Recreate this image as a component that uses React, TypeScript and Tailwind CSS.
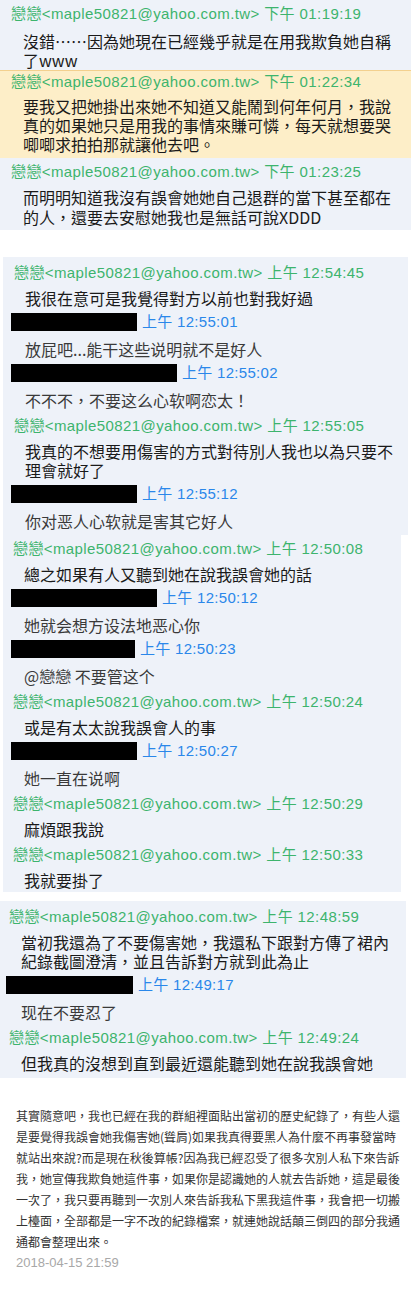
import React from "react";

type Row =
  | { k: "h"; t: string }
  | { k: "m"; lines: string[]; simp?: boolean }
  | { k: "b"; w: string; t: string };

const headCls =
  "flex items-center text-[15px] tracking-[0.4px] text-[#3db46d] whitespace-nowrap font-['Liberation_Sans','Noto_Sans_CJK_TC',sans-serif]";
const msgCls =
  "text-[16px] whitespace-nowrap font-['Noto_Sans_CJK_TC',sans-serif]";

function Header({ t, pl }: { t: string; pl: string }) {
  return (
    <div className={`pt-[2px] h-[26px] ${headCls} ${pl}`}>
      戀戀&lt;maple50821@yahoo.com.tw&gt; {t}
    </div>
  );
}

function Msg({ lines, pl, simp }: { lines: string[]; pl: string; simp?: boolean }) {
  return (
    <div
      className={`pt-[4px] pb-[2px] leading-[19px] ${msgCls} ${pl} ${simp ? "text-[#3a3a3a]" : "text-[#1a1a1a]"}`}
    >
      {lines.map((l, i) => (
        <div key={i}>{l}</div>
      ))}
    </div>
  );
}

function Box({ w, t, pl }: { w: string; t: string; pl: string }) {
  return (
    <div className={`h-[24px] mb-[2px] flex items-center gap-[5px] ${pl}`}>
      <div className={`h-[18px] bg-black ${w}`} />
      <span className="text-[15px] tracking-[0.3px] text-[#2a87ea] whitespace-nowrap font-['Liberation_Sans','Noto_Sans_CJK_TC',sans-serif]">
        {t}
      </span>
    </div>
  );
}

function Panel({ rows, hp, mp, bp }: { rows: Row[]; hp: string; mp: string; bp: string }) {
  return (
    <>
      {rows.map((r, i) =>
        r.k === "h" ? (
          <Header key={i} t={r.t} pl={hp} />
        ) : r.k === "m" ? (
          <Msg key={i} lines={r.lines} pl={mp} simp={r.simp} />
        ) : (
          <Box key={i} w={r.w} t={r.t} pl={bp} />
        )
      )}
    </>
  );
}

const p2: Row[] = [
  { k: "h", t: "上午 12:54:45" },
  { k: "m", lines: ["我很在意可是我覺得對方以前也對我好過"] },
  { k: "b", w: "w-[126px]", t: "上午 12:55:01" },
  { k: "m", lines: ["放屁吧...能干这些说明就不是好人"], simp: true },
  { k: "b", w: "w-[166px]", t: "上午 12:55:02" },
  { k: "m", lines: ["不不不，不要这么心软啊恋太！"], simp: true },
  { k: "h", t: "上午 12:55:05" },
  { k: "m", lines: ["我真的不想要用傷害的方式對待別人我也以為只要不", "理會就好了"] },
  { k: "b", w: "w-[126px]", t: "上午 12:55:12" },
  { k: "m", lines: ["你对恶人心软就是害其它好人"], simp: true },
];

const p3: Row[] = [
  { k: "h", t: "上午 12:50:08" },
  { k: "m", lines: ["總之如果有人又聽到她在說我誤會她的話"] },
  { k: "b", w: "w-[146px]", t: "上午 12:50:12" },
  { k: "m", lines: ["她就会想方设法地恶心你"], simp: true },
  { k: "b", w: "w-[124px]", t: "上午 12:50:23" },
  { k: "m", lines: ["@戀戀 不要管这个"], simp: true },
  { k: "h", t: "上午 12:50:24" },
  { k: "m", lines: ["或是有太太說我誤會人的事"] },
  { k: "b", w: "w-[126px]", t: "上午 12:50:27" },
  { k: "m", lines: ["她一直在说啊"], simp: true },
  { k: "h", t: "上午 12:50:29" },
  { k: "m", lines: ["麻煩跟我說"] },
  { k: "h", t: "上午 12:50:33" },
  { k: "m", lines: ["我就要掛了"] },
];

const p4: Row[] = [
  { k: "h", t: "上午 12:48:59" },
  { k: "m", lines: ["當初我還為了不要傷害她，我還私下跟對方傳了裙內", "紀錄截圖澄清，並且告訴對方就到此為止"] },
  { k: "b", w: "w-[127px]", t: "上午 12:49:17" },
  { k: "m", lines: ["现在不要忍了"], simp: true },
  { k: "h", t: "上午 12:49:24" },
  { k: "m", lines: ["但我真的沒想到直到最近還能聽到她在說我誤會她"] },
];

const para = [
  "其實隨意吧，我也已經在我的群組裡面貼出當初的歷史紀錄了，有些人還",
  "是要覺得我誤會她我傷害她(聳肩)如果我真得要黑人為什麼不再事發當時",
  "就站出來說?而是現在秋後算帳?因為我已經忍受了很多次別人私下來告訴",
  "我，她宣傳我欺負她這件事，如果你是認識她的人就去告訴她，這是最後",
  "一次了，我只要再聽到一次別人來告訴我私下黑我這件事，我會把一切搬",
  "上檯面，全部都是一字不改的紀錄檔案，就連她說話顛三倒四的部分我通",
  "通都會整理出來。",
];

export default function App() {
  return (
    <div className="w-[411px] h-[1304px] bg-white overflow-hidden flex flex-col">
      {/* Block 1 */}
      <div className="w-[411px] bg-[#eef2f9]">
        <div className="pt-[2px]">
          <div className={`h-[24px] pl-[11px] ${headCls}`}>
            戀戀&lt;maple50821@yahoo.com.tw&gt; 下午 01:19:19
          </div>
          <div className={`mt-[6px] pl-[23px] leading-[19px] text-[#1a1a1a] ${msgCls}`}>
            <div>沒錯……因為她現在已經幾乎就是在用我欺負她自稱</div>
            <div>了www</div>
          </div>
        </div>
        <div className="bg-[#fdeec8] border-t border-[#f3d08e] pb-[4px]">
          <div className={`h-[22px] pl-[11px] ${headCls}`}>
            戀戀&lt;maple50821@yahoo.com.tw&gt; 下午 01:22:34
          </div>
          <div className={`mt-[4px] pl-[23px] leading-[19px] text-[#1a1a1a] ${msgCls}`}>
            <div>要我又把她掛出來她不知道又能鬧到何年何月，我說</div>
            <div>真的如果她只是用我的事情來賺可憐，每天就想要哭</div>
            <div>唧唧求拍拍那就讓他去吧。</div>
          </div>
        </div>
        <div className="pt-[2px] pb-[3px]">
          <div className={`h-[24px] pl-[11px] ${headCls}`}>
            戀戀&lt;maple50821@yahoo.com.tw&gt; 下午 01:23:25
          </div>
          <div className={`mt-[3px] pl-[23px] leading-[20px] text-[#1a1a1a] ${msgCls}`}>
            <div>而明明知道我沒有誤會她她自己退群的當下甚至都在</div>
            <div>的人，還要去安慰她我也是無話可說XDDD</div>
          </div>
        </div>
      </div>

      {/* Panel 2 */}
      <div className="mt-[27px] ml-[3px] w-[405px] bg-[#eef2f9] pt-[2px] pb-[2px]">
        <Panel rows={p2} hp="pl-[11px]" mp="pl-[22px]" bp="pl-[8px]" />
      </div>

      {/* Panel 3 */}
      <div className="ml-[3px] w-[398px] bg-[#eef2f9]">
        <Panel rows={p3} hp="pl-[10px]" mp="pl-[21px]" bp="pl-[8px]" />
      </div>

      {/* Panel 4 */}
      <div className="mt-[9px] w-[406px] bg-[#eef2f9] pt-[2px] pb-[3px]">
        <Panel rows={p4} hp="pl-[9px]" mp="pl-[21px]" bp="pl-[6px]" />
      </div>

      {/* Bottom text */}
      <div className="pt-[27px] pl-[16px]">
        <div className="text-[12px] leading-[21px] text-[#333333] whitespace-nowrap font-['Noto_Sans_CJK_TC',sans-serif]">
          {para.map((l, i) => (
            <div key={i}>{l}</div>
          ))}
        </div>
        <div className="text-[13px] leading-[21px] text-[#a8a8a8] font-['Liberation_Sans',sans-serif]">
          2018-04-15 21:59
        </div>
      </div>
    </div>
  );
}
